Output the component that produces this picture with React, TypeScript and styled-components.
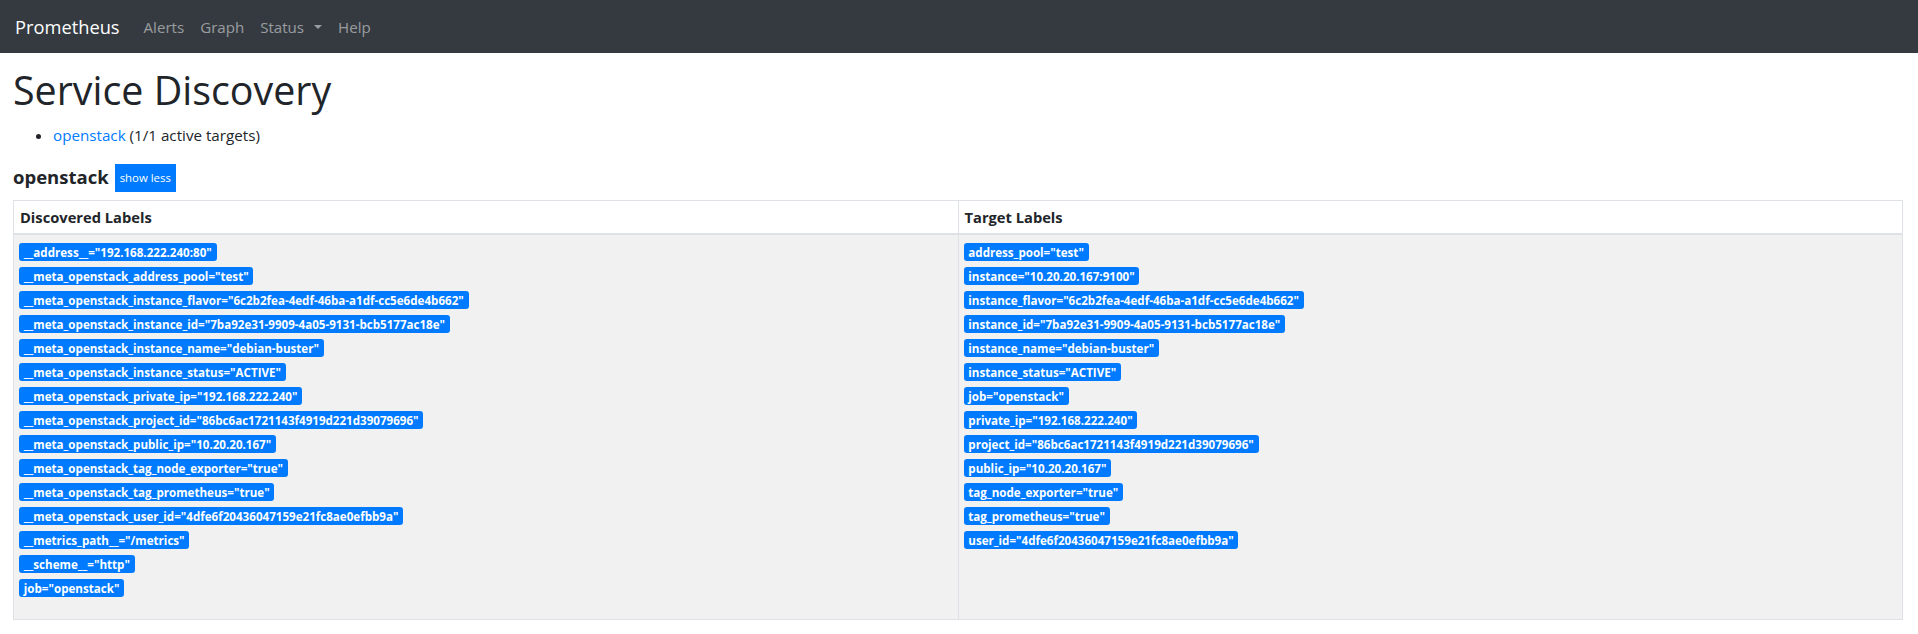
import React from "react";
import styled, { createGlobalStyle } from "styled-components";

const GlobalStyle = createGlobalStyle`
  html, body { margin: 0; padding: 0; background: #fff; }
  body {
    font-family: "Open Sans", "Noto Sans", sans-serif;
    color: #212529;
    font-size: 15px;
  }
  * { box-sizing: border-box; }
`;

const Navbar = styled.nav`
  display: flex;
  align-items: center;
  height: 53px;
  padding: 0 15px;
  background: #343a40;
`;

const Brand = styled.a`
  color: #fff;
  font-size: 18.3px;
  margin-right: 16px;
  text-decoration: none;
  white-space: nowrap;
`;

const NavLink = styled.a<{ $caret?: boolean }>`
  color: rgba(255, 255, 255, 0.5);
  font-size: 15.1px;
  padding: 0 8px;
  text-decoration: none;
  white-space: nowrap;
  display: inline-flex;
  align-items: center;
  ${(p) =>
    p.$caret &&
    `
    &::after {
      content: "";
      display: inline-block;
      margin-left: 10px;
      margin-top: 1px;
      border-top: 4px solid rgba(255, 255, 255, 0.5);
      border-left: 4px solid transparent;
      border-right: 4px solid transparent;
    }
  `}
`;

const Main = styled.main`
  padding: 0 15px 0 13px;
`;

const Title = styled.h1`
  margin: 13px 0 0;
  font-size: 39.4px;
  font-weight: 400;
  line-height: 48px;
  white-space: nowrap;
`;

const JobList = styled.ul`
  margin: 9px 0 0;
  padding-left: 40px;
  font-size: 15.2px;
  line-height: 24px;
`;

const JobLink = styled.a`
  color: #007bff;
  text-decoration: none;
`;

const JobHeader = styled.div`
  display: flex;
  align-items: flex-start;
  margin-top: 17px;
`;

const JobName = styled.h3`
  margin: 0;
  padding-top: 1px;
  font-size: 18.5px;
  font-weight: 700;
  line-height: 23px;
`;

const ToggleButton = styled.button`
  margin-left: 6px;
  height: 28px;
  padding: 0 5px;
  border: 0;
  border-radius: 0;
  background: #007bff;
  color: #fff;
  font-family: inherit;
  font-size: 11.4px;
  line-height: 28px;
  cursor: pointer;
`;

const Table = styled.table`
  margin-top: 8px;
  width: 100%;
  table-layout: fixed;
  border-collapse: collapse;
  border: 1px solid #dee2e6;
`;

const HeadCell = styled.th`
  text-align: left;
  font-size: 14.7px;
  font-weight: 700;
  line-height: 24px;
  padding: 4px 6px;
  background: #fff;
  border-left: 1px solid #dee2e6;
  border-bottom: 2px solid #dee2e6;
`;

const BodyCell = styled.td`
  vertical-align: top;
  padding: 8px 5px 22px;
  background: #f1f1f1;
  border-left: 1px solid #dee2e6;
`;

const LabelList = styled.div`
  display: flex;
  flex-direction: column;
  align-items: flex-start;
  gap: 6px;
`;

const Badge = styled.span`
  display: inline-flex;
  align-items: center;
  height: 18px;
  padding: 0 4.8px;
  border-radius: 3px;
  background: #007bff;
  color: #fff;
  font-size: 11.6px;
  font-weight: 700;
  white-space: nowrap;
`;

const discovered: [string, string][] = [
  ["__address__", "192.168.222.240:80"],
  ["__meta_openstack_address_pool", "test"],
  ["__meta_openstack_instance_flavor", "6c2b2fea-4edf-46ba-a1df-cc5e6de4b662"],
  ["__meta_openstack_instance_id", "7ba92e31-9909-4a05-9131-bcb5177ac18e"],
  ["__meta_openstack_instance_name", "debian-buster"],
  ["__meta_openstack_instance_status", "ACTIVE"],
  ["__meta_openstack_private_ip", "192.168.222.240"],
  ["__meta_openstack_project_id", "86bc6ac1721143f4919d221d39079696"],
  ["__meta_openstack_public_ip", "10.20.20.167"],
  ["__meta_openstack_tag_node_exporter", "true"],
  ["__meta_openstack_tag_prometheus", "true"],
  ["__meta_openstack_user_id", "4dfe6f20436047159e21fc8ae0efbb9a"],
  ["__metrics_path__", "/metrics"],
  ["__scheme__", "http"],
  ["job", "openstack"],
];

const target: [string, string][] = [
  ["address_pool", "test"],
  ["instance", "10.20.20.167:9100"],
  ["instance_flavor", "6c2b2fea-4edf-46ba-a1df-cc5e6de4b662"],
  ["instance_id", "7ba92e31-9909-4a05-9131-bcb5177ac18e"],
  ["instance_name", "debian-buster"],
  ["instance_status", "ACTIVE"],
  ["job", "openstack"],
  ["private_ip", "192.168.222.240"],
  ["project_id", "86bc6ac1721143f4919d221d39079696"],
  ["public_ip", "10.20.20.167"],
  ["tag_node_exporter", "true"],
  ["tag_prometheus", "true"],
  ["user_id", "4dfe6f20436047159e21fc8ae0efbb9a"],
];

function Labels({ items }: { items: [string, string][] }) {
  return (
    <LabelList>
      {items.map(([k, v]) => (
        <Badge key={k}>{`${k}="${v}"`}</Badge>
      ))}
    </LabelList>
  );
}

export default function App() {
  return (
    <>
      <GlobalStyle />
      <Navbar>
        <Brand href="#">Prometheus</Brand>
        <NavLink href="#">Alerts</NavLink>
        <NavLink href="#">Graph</NavLink>
        <NavLink href="#" $caret>Status</NavLink>
        <NavLink href="#">Help</NavLink>
      </Navbar>
      <Main>
        <Title>Service Discovery</Title>
        <JobList>
          <li>
            <JobLink href="#openstack">openstack</JobLink> (1/1 active targets)
          </li>
        </JobList>
        <JobHeader>
          <JobName>openstack</JobName>
          <ToggleButton>show less</ToggleButton>
        </JobHeader>
        <Table>
          <thead>
            <tr>
              <HeadCell>Discovered Labels</HeadCell>
              <HeadCell>Target Labels</HeadCell>
            </tr>
          </thead>
          <tbody>
            <tr>
              <BodyCell>
                <Labels items={discovered} />
              </BodyCell>
              <BodyCell>
                <Labels items={target} />
              </BodyCell>
            </tr>
          </tbody>
        </Table>
      </Main>
    </>
  );
}
